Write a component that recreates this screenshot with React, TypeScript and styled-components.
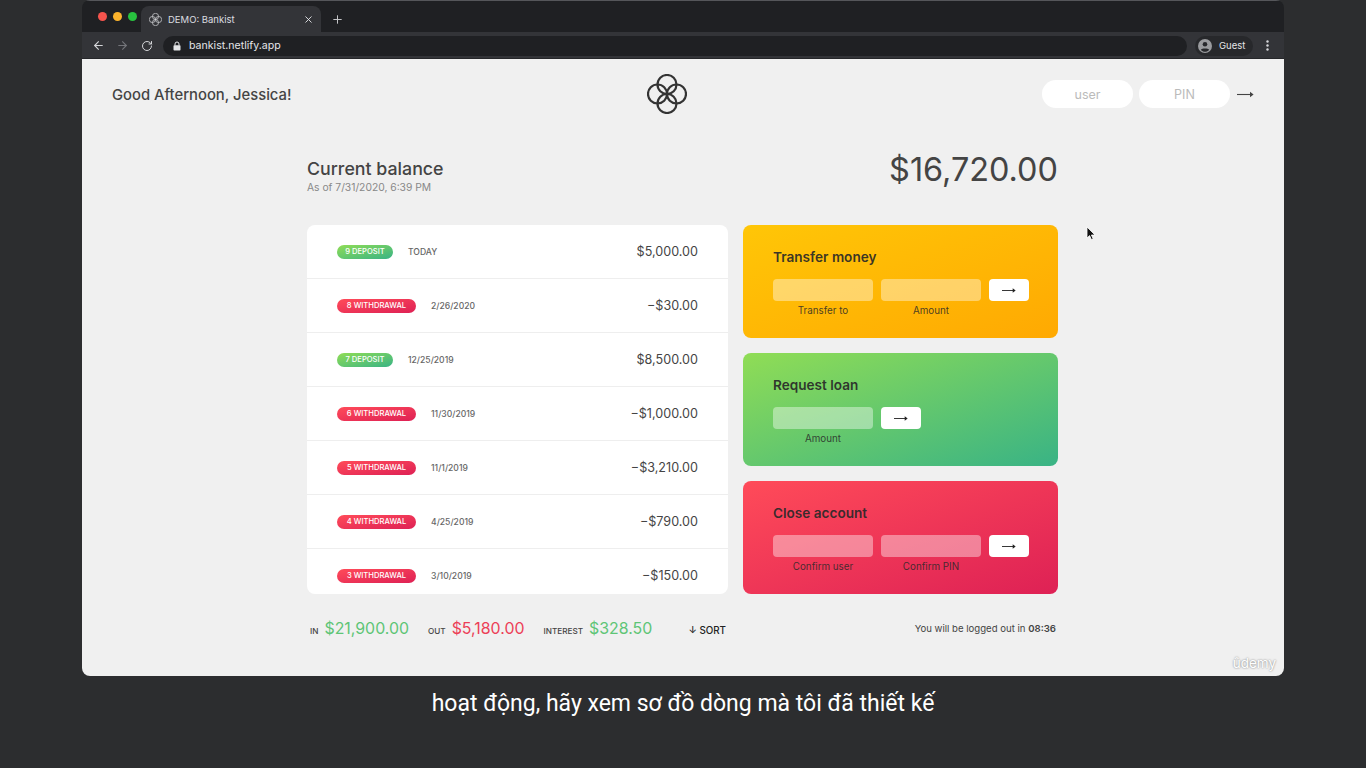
import React from 'react'
import styled, { createGlobalStyle } from 'styled-components'
import { ArrowLeft, ArrowRight, RotateCw, X, Plus } from 'lucide-react'

const GlobalStyle = createGlobalStyle`
  * { margin: 0; padding: 0; box-sizing: border-box; }
  html, body { height: 100%; overflow: hidden; }
  body {
    background: #2c2d2f;
    font-family: Inter, "Noto Sans", sans-serif;
    color: #444;
  }
`

const Stage = styled.div`
  width: 1366px;
  height: 768px;
  display: flex;
  flex-direction: column;
  align-items: center;
`

const Browser = styled.div`
  width: 1202px;
  height: 676px;
  border-radius: 8px;
  overflow: hidden;
  display: flex;
  flex-direction: column;
  flex-shrink: 0;
`

const TabBar = styled.div`
  height: 32px;
  flex-shrink: 0;
  background: #1f2023;
  border-top: 1px solid #55565a;
  display: flex;
  align-items: flex-end;
  padding-left: 16px;
`

const Lights = styled.div`
  display: flex;
  gap: 6px;
  align-self: flex-start;
  margin-top: 11px;
  margin-right: 4px;
`

const Light = styled.span<{ $color: string }>`
  width: 9px;
  height: 9px;
  border-radius: 50%;
  background: ${({ $color }) => $color};
`

const Tab = styled.div`
  width: 180px;
  height: 26px;
  background: #333438;
  border-radius: 8px 8px 0 0;
  display: flex;
  align-items: center;
  padding: 0 7px 0 8px;
  color: #dcdde0;
  font-size: 9.5px;
  gap: 6px;
`

const TabTitle = styled.span`
  flex: 1;
`

const NewTab = styled.div`
  height: 26px;
  margin-left: 10px;
  display: flex;
  align-items: center;
  color: #c8c9cc;
`

const ToolBar = styled.div`
  height: 27px;
  flex-shrink: 0;
  background: #333438;
  display: flex;
  align-items: center;
  padding: 0 3px 0 10px;
  color: #d5d6d9;
  box-shadow: inset 0 -1px 0 #26272a;
`

const NavIcons = styled.div`
  display: flex;
  align-items: center;
  gap: 11px;
  margin-right: 10px;
`

const ReloadSlot = styled.span`
  display: flex;
  margin-left: 1px;
`

const Omnibox = styled.div`
  flex: 1;
  height: 20px;
  background: #1f2023;
  border-radius: 10px;
  display: flex;
  align-items: center;
  gap: 8px;
  padding-left: 10px;
  font-size: 10.6px;
  color: #e4e5e8;
`

const GuestPill = styled.div`
  width: 58px;
  height: 20px;
  margin-left: 8px;
  border-radius: 10px;
  background: #27282b;
  display: flex;
  align-items: center;
  gap: 7px;
  padding-left: 3px;
  font-size: 9.5px;
  color: #e4e5e8;
`

const MenuDots = styled.div`
  width: 28px;
  display: flex;
  justify-content: center;
`

const Page = styled.div`
  flex: 1;
  min-height: 0;
  background: #f0f0f0;
  position: relative;
`

const Nav = styled.nav`
  height: 70px;
  padding: 0 30px;
  display: flex;
  align-items: center;
  justify-content: space-between;
`

const Welcome = styled.p`
  font-size: 14.8px;
  font-weight: 500;
  width: 179px;
  white-space: nowrap;
  padding-top: 1px;
`

const LoginForm = styled.form`
  display: flex;
  align-items: center;
  width: 212px;
`

const LoginInput = styled.input`
  width: 91px;
  height: 28px;
  border: none;
  border-radius: 14px;
  background: #fff;
  margin-right: 6px;
  font-family: inherit;
  font-size: 12.5px;
  text-align: center;
  &::placeholder { color: #bbb; opacity: 1; }
`

const LoginArrow = styled.span`
  display: flex;
  margin-left: 1px;
`

const Main = styled.main`
  width: 751px;
  margin: 21px 0 0 225px;
  display: grid;
  grid-template-columns: 421px 315px;
  grid-template-rows: auto 113px 113px 113px auto;
  column-gap: 15px;
  row-gap: 15px;
`

const Balance = styled.div`
  grid-column: 1 / span 2;
  display: flex;
  justify-content: space-between;
  align-items: flex-end;
  height: 45px;
  margin-bottom: 15px;
`

const BalanceTitle = styled.p`
  font-size: 17.8px;
  font-weight: 500;
  line-height: 20px;
`

const BalanceDate = styled.p`
  font-size: 10.3px;
  color: #888;
  line-height: 14px;
  margin-top: 1px;
  margin-bottom: 1px;
`

const BalanceValue = styled.p`
  font-size: 32.4px;
  font-weight: 400;
  line-height: 42px;
  margin-bottom: 4px;
`

const Movements = styled.div`
  grid-row: span 3;
  background: #fff;
  border-radius: 8px;
  overflow: hidden;
`

const Row = styled.div`
  height: 54px;
  padding: 0 30px;
  display: flex;
  align-items: center;
  border-bottom: 1px solid #eee;
`

const Badge = styled.div<{ $kind: 'deposit' | 'withdrawal' }>`
  height: 14px;
  width: ${({ $kind }) => ($kind === 'deposit' ? '56px' : '79px')};
  border-radius: 7px;
  display: flex;
  align-items: center;
  justify-content: center;
  font-size: 7.6px;
  font-weight: 500;
  color: #fff;
  white-space: nowrap;
  text-transform: uppercase;
  background-image: ${({ $kind }) =>
    $kind === 'deposit'
      ? 'linear-gradient(to top left, #39b385, #90dd55)'
      : 'linear-gradient(to top left, #de2155, #ff4b59)'};
`

const RowDate = styled.div`
  font-size: 8.6px;
  font-weight: 500;
  color: #666;
  margin-left: 15px;
`

const RowValue = styled.div`
  margin-left: auto;
  font-size: 12.6px;
  color: #444;
`

const Operation = styled.div<{ $from: string; $to: string }>`
  border-radius: 8px;
  padding: 23px 30px 0;
  background-image: linear-gradient(to top left, ${({ $from }) => $from}, ${({ $to }) => $to});
`

const OperationTitle = styled.h2`
  font-size: 13.6px;
  font-weight: 600;
  line-height: 18px;
  color: rgba(40, 40, 40, 0.92);
  margin-bottom: 13px;
`

const OperationForm = styled.form<{ $short?: boolean }>`
  display: grid;
  grid-template-columns: ${({ $short }) => ($short ? '100px 40px' : '100px 100px 40px')};
  column-gap: 8px;
  row-gap: 3px;
`

const OperationInput = styled.input`
  height: 22px;
  border: none;
  border-radius: 4px;
  background: rgba(255, 255, 255, 0.4);
`

const GoButton = styled.button`
  height: 22px;
  border: none;
  border-radius: 4px;
  background: #fff;
  display: flex;
  align-items: center;
  justify-content: center;
`

const OperationLabel = styled.label`
  font-size: 9.8px;
  line-height: 14px;
  color: rgba(40, 40, 40, 0.85);
  text-align: center;
`

const Summary = styled.div`
  display: flex;
  align-items: baseline;
  padding: 9.5px 2px 0 3px;
`

const SummaryLabel = styled.p`
  font-size: 8.2px;
  font-weight: 500;
  text-transform: uppercase;
  margin-right: 6px;
`

const SummaryValue = styled.p<{ $color: string }>`
  font-size: 15.9px;
  margin-right: 19px;
  color: ${({ $color }) => $color};
`

const SortButton = styled.button`
  margin-left: auto;
  border: none;
  background: none;
  font-family: inherit;
  font-size: 9.8px;
  font-weight: 500;
  color: #222;
`

const Timer = styled.p`
  font-size: 9.6px;
  text-align: right;
  padding: 14px 2px 0 0;
  strong { font-weight: 600; }
`

const Watermark = styled.span`
  position: absolute;
  right: 8px;
  bottom: 5px;
  font-size: 13.5px;
  color: #fff;
  text-shadow: 0 0 2px rgba(0, 0, 0, 0.55);
`

const Cursor = styled.svg`
  position: absolute;
  left: 1004px;
  top: 167px;
`

const Caption = styled.p`
  margin-top: 15px;
  font-family: Roboto, "Noto Sans", sans-serif;
  font-size: 23px;
  line-height: 26px;
  color: #fff;
`

const LongArrow = ({ size = 17, color = '#444' }: { size?: number; color?: string }) => (
  <svg width={size} height="9" viewBox="0 0 17 9">
    <path d="M0 4.5H15.5" stroke={color} strokeWidth="1.1" />
    <path d="M13 1.8L16.6 4.5L13 7.2Z" fill={color} />
  </svg>
)

const Logo = ({ size, color }: { size: number; color: string }) => (
  <svg width={size} height={size} viewBox="0 0 40 40" fill="none" stroke={color} strokeWidth={2.2}>
    <circle cx="20" cy="10.5" r="9.5" />
    <circle cx="20" cy="29.5" r="9.5" />
    <circle cx="10.5" cy="20" r="9.5" />
    <circle cx="29.5" cy="20" r="9.5" />
  </svg>
)

const GuestIcon = () => (
  <svg width="14" height="14" viewBox="0 0 14 14">
    <circle cx="7" cy="7" r="7" fill="#9a9b9e" />
    <circle cx="7" cy="5.3" r="2.3" fill="#27282b" />
    <path d="M2.8 10.8C4 8.9 10 8.9 11.2 10.8C10 12.3 8.6 12.8 7 12.8C5.4 12.8 4 12.3 2.8 10.8Z" fill="#27282b" />
  </svg>
)

const LockIcon = () => (
  <svg width="8" height="10" viewBox="0 0 8 10">
    <path d="M2 4.5V3a2 2 0 0 1 4 0v1.5" fill="none" stroke="#e4e5e8" strokeWidth="1" />
    <rect x="0.5" y="4.2" width="7" height="5.3" rx="0.8" fill="#e4e5e8" />
  </svg>
)

const movements = [
  { n: 9, kind: 'deposit', date: 'TODAY', value: '$5,000.00' },
  { n: 8, kind: 'withdrawal', date: '2/26/2020', value: '−$30.00' },
  { n: 7, kind: 'deposit', date: '12/25/2019', value: '$8,500.00' },
  { n: 6, kind: 'withdrawal', date: '11/30/2019', value: '−$1,000.00' },
  { n: 5, kind: 'withdrawal', date: '11/1/2019', value: '−$3,210.00' },
  { n: 4, kind: 'withdrawal', date: '4/25/2019', value: '−$790.00' },
  { n: 3, kind: 'withdrawal', date: '3/10/2019', value: '−$150.00' },
] as const

const operations = [
  { title: 'Transfer money', from: '#ffa902', to: '#ffc607', labels: ['Transfer to', 'Amount'] },
  { title: 'Request loan', from: '#39b385', to: '#90dd55', labels: ['Amount'] },
  { title: 'Close account', from: '#de2155', to: '#ff4b59', labels: ['Confirm user', 'Confirm PIN'] },
]

export default function App() {
  return (
    <Stage>
      <GlobalStyle />
      <Browser>
        <TabBar>
          <Lights>
            <Light $color="#f5544d" />
            <Light $color="#fbb32c" />
            <Light $color="#28c13f" />
          </Lights>
          <Tab>
            <Logo size={13} color="#d5d6d9" />
            <TabTitle>DEMO: Bankist</TabTitle>
            <X size={11} strokeWidth={2} color="#e4e5e8" />
          </Tab>
          <NewTab>
            <Plus size={13} strokeWidth={1.8} />
          </NewTab>
        </TabBar>
        <ToolBar>
          <NavIcons>
            <ArrowLeft size={13} strokeWidth={2} />
            <ArrowRight size={13} strokeWidth={2} color="#74757a" />
            <ReloadSlot>
              <RotateCw size={12} strokeWidth={2} />
            </ReloadSlot>
          </NavIcons>
          <Omnibox>
            <LockIcon />
            bankist.netlify.app
          </Omnibox>
          <GuestPill>
            <GuestIcon />
            Guest
          </GuestPill>
          <MenuDots>
            <svg width="3" height="11" viewBox="0 0 3 11" fill="#d5d6d9">
              <circle cx="1.5" cy="1.5" r="1.2" />
              <circle cx="1.5" cy="5.5" r="1.2" />
              <circle cx="1.5" cy="9.5" r="1.2" />
            </svg>
          </MenuDots>
        </ToolBar>
        <Page>
          <Nav>
            <Welcome>Good Afternoon, Jessica!</Welcome>
            <Logo size={40} color="#333" />
            <LoginForm>
              <LoginInput placeholder="user" readOnly />
              <LoginInput placeholder="PIN" readOnly />
              <LoginArrow>
                <LongArrow />
              </LoginArrow>
            </LoginForm>
          </Nav>
          <Main>
            <Balance>
              <div>
                <BalanceTitle>Current balance</BalanceTitle>
                <BalanceDate>As of 7/31/2020, 6:39 PM</BalanceDate>
              </div>
              <BalanceValue>$16,720.00</BalanceValue>
            </Balance>
            <Movements>
              {movements.map((m) => (
                <Row key={m.n}>
                  <Badge $kind={m.kind}>{m.n} {m.kind}</Badge>
                  <RowDate>{m.date}</RowDate>
                  <RowValue>{m.value}</RowValue>
                </Row>
              ))}
            </Movements>
            {operations.map((op) => (
              <Operation key={op.title} $from={op.from} $to={op.to}>
                <OperationTitle>{op.title}</OperationTitle>
                <OperationForm $short={op.labels.length === 1}>
                  {op.labels.map((l) => (
                    <OperationInput key={l} readOnly />
                  ))}
                  <GoButton type="button">
                    <LongArrow size={14} color="#222" />
                  </GoButton>
                  {op.labels.map((l) => (
                    <OperationLabel key={l}>{l}</OperationLabel>
                  ))}
                </OperationForm>
              </Operation>
            ))}
            <Summary>
              <SummaryLabel>In</SummaryLabel>
              <SummaryValue $color="#5ec576">$21,900.00</SummaryValue>
              <SummaryLabel>Out</SummaryLabel>
              <SummaryValue $color="#ec3f57">$5,180.00</SummaryValue>
              <SummaryLabel>Interest</SummaryLabel>
              <SummaryValue $color="#5ec576">$328.50</SummaryValue>
              <SortButton type="button">↓ SORT</SortButton>
            </Summary>
            <Timer>
              You will be logged out in <strong>08:36</strong>
            </Timer>
          </Main>
          <Cursor width="10" height="15" viewBox="0 0 10 15">
            <path d="M1 1V12L3.6 9.6L5.4 13.6L7.2 12.8L5.4 9H9Z" fill="#111" stroke="#fff" strokeWidth="0.8" />
          </Cursor>
          <Watermark>ûdemy</Watermark>
        </Page>
      </Browser>
      <Caption>hoạt động, hãy xem sơ đồ dòng mà tôi đã thiết kế</Caption>
    </Stage>
  )
}
